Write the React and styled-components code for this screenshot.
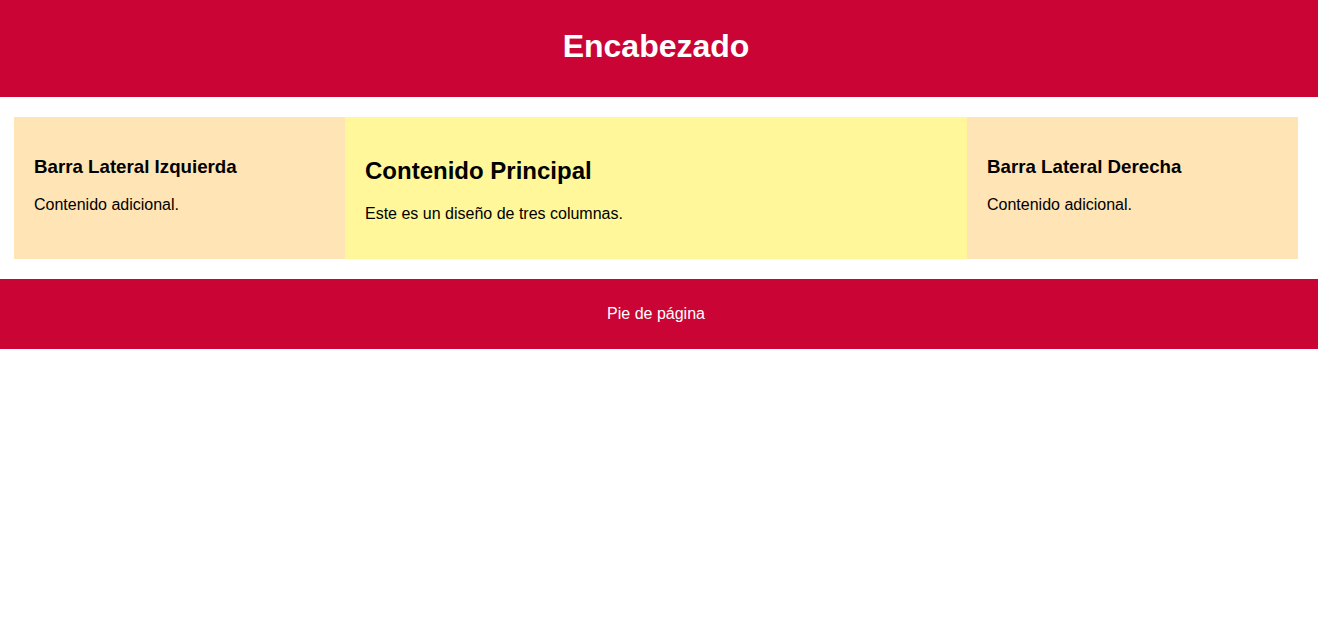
import styled, { createGlobalStyle } from "styled-components";

const Global = createGlobalStyle`
  body {
    margin: 0;
    font-family: "Liberation Sans", Arial, sans-serif;
    background: #ffffff;
    color: #000;
  }
`;

const Header = styled.header`
  background-color: #ca0535;
  color: #fff;
  text-align: center;
  padding: 8px 6px 12px 0;
`;

const Title = styled.h1`
  margin: 20px 0;
  font-size: 32px;
  line-height: 37px;
  font-weight: bold;
`;

const Main = styled.main`
  display: flex;
  padding: 20px 20px 20px 14px;
`;

// flex-basis 0 so que el reparto 1:2:1 sea sobre el contenido
const Column = styled.section`
  flex: ${(props) => props.grow} 1 0;
  padding: 20px;
  background-color: ${(props) => props.bg};
`;

const SideTitle = styled.h3`
  font-size: 18.72px;
  margin: 18.72px 0;
`;

const MainTitle = styled.h2`
  font-size: 24px;
  margin: 19.92px 0;
`;

const Text = styled.p`
  font-size: 16px;
  margin: 16px 0;
`;

const Footer = styled.footer`
  background-color: #ca0535;
  color: #fff;
  text-align: center;
  padding: 26px 6px 26px 0;
  font-size: 16px;
  line-height: 18px;
`;

function App() {
  return (
    <>
      <Global />
      <Header>
        <Title>Encabezado</Title>
      </Header>
      <Main>
        <Column grow={1} bg="#ffe4b5">
          <SideTitle>Barra Lateral Izquierda</SideTitle>
          <Text>Contenido adicional.</Text>
        </Column>
        <Column grow={2} bg="#fff799">
          <MainTitle>Contenido Principal</MainTitle>
          <Text>Este es un diseño de tres columnas.</Text>
        </Column>
        <Column grow={1} bg="#ffe4b5">
          <SideTitle>Barra Lateral Derecha</SideTitle>
          <Text>Contenido adicional.</Text>
        </Column>
      </Main>
      <Footer>Pie de página</Footer>
    </>
  );
}

export default App;
